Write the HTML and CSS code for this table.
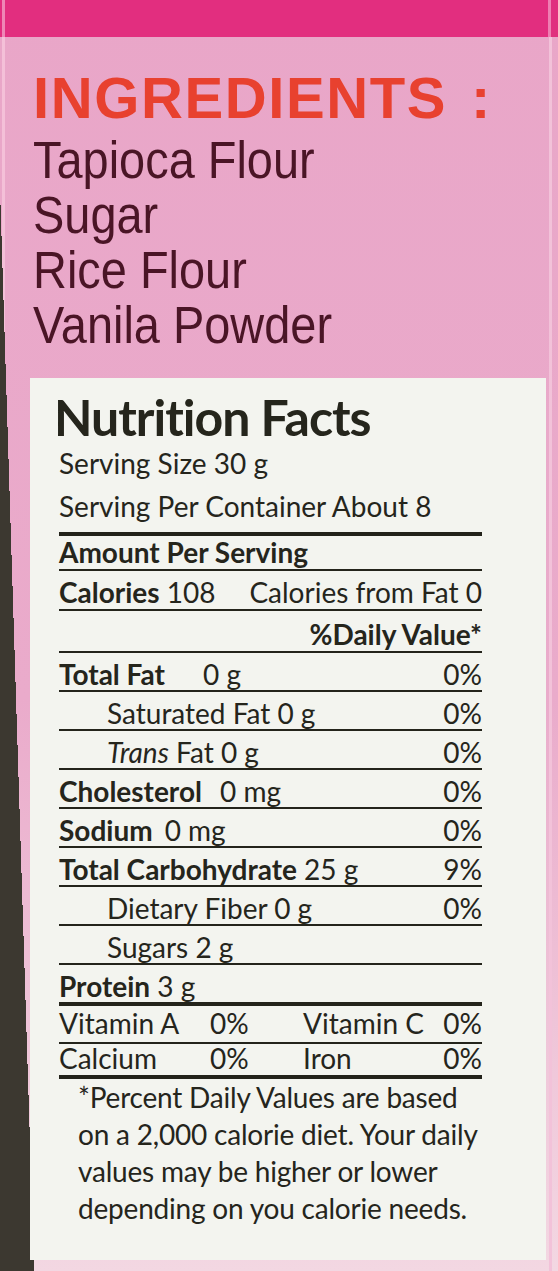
FILE: index.html
```html
<!DOCTYPE html>
<html lang="en">
<head>
    <meta charset="UTF-8">
    <meta name="viewport" content="width=device-width, initial-scale=1.0">
    <title>Ingredients and Nutrition Facts</title>
    <link rel="stylesheet" href="styles.css">
</head>
<body>
    <div class="lid"></div>
    <section class="ingredients">
        <h2>INGREDIENTS<span class="colon">:</span></h2>
        <ul>
            <li>Tapioca Flour</li>
            <li>Sugar</li>
            <li>Rice Flour</li>
            <li>Vanila Powder</li>
        </ul>
    </section>
    <section class="facts">
        <h1>Nutrition Facts</h1>
        <p class="serving">Serving Size 30 g</p>
        <p class="serving second">Serving Per Container About 8</p>
        <div class="rule-thick"></div>
        <div class="row amount"><b>Amount Per Serving</b></div>
        <div class="row calories">
            <span><b>Calories</b> 108</span>
            <span class="dv">Calories from Fat 0</span>
        </div>
        <div class="row daily"><b>%Daily Value*</b></div>
        <div class="row">
            <span><b class="wide">Total Fat</b>0 g</span>
            <span class="dv">0%</span>
        </div>
        <div class="row sub">
            <span>Saturated Fat 0 g</span>
            <span class="dv">0%</span>
        </div>
        <div class="row sub">
            <span><i>Trans</i> Fat 0 g</span>
            <span class="dv">0%</span>
        </div>
        <div class="row">
            <span><b class="mid">Cholesterol</b>0 mg</span>
            <span class="dv">0%</span>
        </div>
        <div class="row">
            <span><b class="narrow">Sodium</b>0 mg</span>
            <span class="dv">0%</span>
        </div>
        <div class="row">
            <span><b>Total Carbohydrate</b> 25 g</span>
            <span class="dv">9%</span>
        </div>
        <div class="row sub">
            <span>Dietary Fiber 0 g</span>
            <span class="dv">0%</span>
        </div>
        <div class="row sub">
            <span>Sugars 2 g</span>
        </div>
        <div class="row protein">
            <span><b>Protein</b> 3 g</span>
        </div>
        <div class="vitamins vit-top">
            <span>Vitamin A</span><span>0%</span>
            <span>Vitamin C</span><span class="pct">0%</span>
        </div>
        <div class="vitamins vit-bottom">
            <span>Calcium</span><span>0%</span>
            <span>Iron</span><span class="pct">0%</span>
        </div>
        <p class="footnote">*Percent Daily Values are based<br>on a 2,000 calorie diet. Your daily<br>values may be higher or lower<br>depending on you calorie needs.</p>
    </section>
</body>
</html>
```

FILE: styles.css
```css
body {
    margin: 0;
    width: 558px;
    height: 1271px;
    overflow: hidden;
    background-color: #eaaacb;
    background-image:
        linear-gradient(88.2deg, #3c3830 34px, transparent 34px),
        linear-gradient(to right, transparent 2px, #f4c0d8 2px, #f4c0d8 5px, transparent 5px),
        linear-gradient(to left, transparent 6px, #f2c2d9 6px, #f2c2d9 9px, transparent 9px),
        linear-gradient(to bottom, #e9a6c8 0%, #eaabcb 55%, #f3d7e2 100%);
}
.lid {
    height: 37px;
    background: linear-gradient(to right, #e22e7f 2px, #ef86b6 2px, #ef86b6 5px, #e22e7f 5px, #e22e7f 548px, #ee7fb2 548px, #ee7fb2 551px, #e0307e 551px);
}
.ingredients {
    box-sizing: border-box;
    height: 341px;
    padding: 32px 0 0 33px;
    font-family: "Liberation Sans", Arial, sans-serif;
    color: #4a1526;
}
.ingredients h2 {
    margin: 0;
    font-size: 58px;
    line-height: 58px;
    font-weight: bold;
    letter-spacing: 1.6px;
    color: #e8412f;
}
.colon {
    margin-left: 24px;
}
.ingredients ul {
    margin: 6px 0 0;
    padding: 0;
    list-style: none;
    font-size: 51px;
    line-height: 55px;
    transform: scaleX(0.92);
    transform-origin: left top;
}
.facts {
    box-sizing: border-box;
    height: 882px;
    margin: 0 12px 0 30px;
    padding: 14px 64px 0 29px;
    background-color: #f3f4ef;
    font-family: Lato, "Open Sans", sans-serif;
    font-size: 28px;
    color: #25251c;
}
.facts h1 {
    margin: 0 0 0 -5px;
    font-size: 50px;
    line-height: 50px;
    font-weight: bold;
    letter-spacing: -1px;
}
.serving {
    margin: 4px 0 0;
    line-height: 35px;
}
.serving.second {
    margin-top: 8px;
}
.rule-thick {
    height: 4px;
    margin-top: 8px;
    background-color: #22221a;
}
.row {
    display: flex;
    height: 37px;
    line-height: 42px;
    border-bottom: 2px solid #24241b;
    white-space: nowrap;
}
.row .dv {
    margin-left: auto;
}
.row.amount {
    height: 33px;
    line-height: 32px;
}
.row.calories {
    height: 38px;
}
.row.daily {
    height: 40px;
    line-height: 46px;
    justify-content: flex-end;
}
.row.sub {
    padding-left: 48px;
}
.row.protein {
    border-bottom-width: 4px;
}
.wide {
    margin-right: 38px;
}
.mid {
    margin-right: 18px;
}
.narrow {
    margin-right: 12px;
}
.vitamins {
    display: grid;
    grid-template-columns: 151px 93px 1fr auto;
    white-space: nowrap;
}
.vitamins .pct {
    text-align: right;
}
.vit-top {
    height: 36px;
    line-height: 34px;
    border-bottom: 2px solid #24241b;
}
.vit-bottom {
    height: 31px;
    line-height: 28px;
    border-bottom: 4px solid #22221a;
}
.footnote {
    margin: 0;
    padding-left: 19px;
    line-height: 37px;
    letter-spacing: -0.2px;
    white-space: nowrap;
}
```
